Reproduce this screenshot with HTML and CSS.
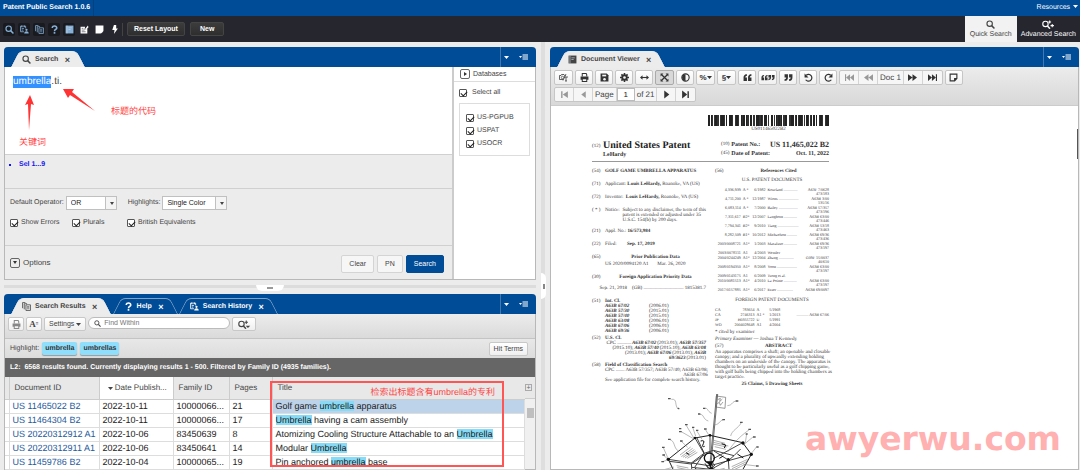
FILE: index.html
```html
<!DOCTYPE html>
<html lang="en">
<head>
    <meta charset="UTF-8">
    <meta name="viewport" content="width=device-width, initial-scale=1.0">
    <title>Patent Public Search</title>
    <link rel="stylesheet" href="styles.css">
</head>
<body>
    <svg class="sprite" aria-hidden="true">
        <symbol id="search" viewBox="0 0 16 16"><circle cx="6.5" cy="6.5" r="4.8" fill="none" stroke="currentColor" stroke-width="2"/><path d="M10 10l5 5" stroke="currentColor" stroke-width="2.6"/></symbol>
        <symbol id="search-plus" viewBox="0 0 22 16"><circle cx="6.5" cy="7" r="4.8" fill="none" stroke="currentColor" stroke-width="2"/><path d="M10 10.500l4.500 5" stroke="currentColor" stroke-width="2.600"/><path d="M15 1v6M12 4h6" stroke="currentColor" stroke-width="1.800"/><path d="M14 10h8l-4 4z" fill="currentColor"/></symbol>
        <symbol id="search-adv" viewBox="0 0 22 16"><circle cx="6.5" cy="7" r="4.8" fill="none" stroke="currentColor" stroke-width="2"/><path d="M10 10.500l4.500 5" stroke="currentColor" stroke-width="2.600"/><path d="M14 1v5M11.500 3.500h5M18.500 7v6M15.500 10h6" stroke="currentColor" stroke-width="1.800"/></symbol>
        <symbol id="history" viewBox="0 0 16 16"><path d="M1 2h9v4M1 2v10h6M3 1v3M8 1v3M3 6h4M3 9h3" fill="none" stroke="currentColor" stroke-width="1.500"/><circle cx="11.500" cy="8.500" r="2" fill="currentColor"/><path d="M7.500 15c0-5 8-5 8 0z" fill="currentColor"/></symbol>
        <symbol id="pages" viewBox="0 0 16 16"><path d="M1 11V1h5M4 13V3h5" fill="none" stroke="currentColor" stroke-width="1.400"/><path d="M7 5h8v10H7z" fill="none" stroke="currentColor" stroke-width="1.400"/><path d="M9 8h4M9 10h4M9 12h4" stroke="currentColor"/></symbol>
        <symbol id="help" viewBox="0 0 16 16"><path d="M4 5.500C4 0 12.500 1 12 5.500 11.800 8 8 8 8 11" fill="none" stroke="currentColor" stroke-width="2.800"/><path d="M6.500 12.500h3v3h-3z" fill="currentColor"/></symbol>
        <symbol id="book" viewBox="0 0 16 16"><path d="M1 1h14v14H1z" fill="currentColor"/><path d="M3.500 1v14M6 5h6M6 8h4" stroke="#c8d4de" stroke-width="1.200"/></symbol>
        <symbol id="note-edit" viewBox="0 0 16 16"><path d="M1 3h8l-1 5 5-1v8H1z" fill="currentColor"/><path d="M9 7l5-6 1 3-4 5z" fill="currentColor"/><path d="M3 6h3M3 9h5M3 12h7" stroke="#26262e"/></symbol>
        <symbol id="note-solid" viewBox="0 0 16 16"><path d="M1 1h14v9l-5 5H1z" fill="currentColor"/><path d="M11 15v-4h4z" fill="currentColor"/></symbol>
        <symbol id="bolt" viewBox="0 0 16 16"><path d="M7 0h4v6h3L7 16l1-7H4z" fill="currentColor"/></symbol>
        <symbol id="print" viewBox="0 0 16 16"><path d="M4 6V1h7l1 2v3" fill="none" stroke="currentColor" stroke-width="1.800"/><path d="M1 6h14v6h-3v-2H4v2H1z" fill="currentColor"/><path d="M4 10h8v5H4z" fill="none" stroke="currentColor" stroke-width="1.800"/></symbol>
        <symbol id="camera" viewBox="0 0 18 16"><path d="M1 4h3l1-2h5l1 2h2M1 4v8h7" fill="none" stroke="currentColor" stroke-width="1.500"/><circle cx="7" cy="8" r="2.500" fill="none" stroke="currentColor" stroke-width="1.300"/><path d="M14 1L8 14M10 7h8M14 7v8M12 15h4" stroke="currentColor" stroke-width="1.500"/></symbol>
        <symbol id="save" viewBox="0 0 16 16"><path d="M1 1h11l3 3v11H1z" fill="currentColor"/><path d="M4 3h7v3H4z" fill="#f4f4f4"/><circle cx="8" cy="11" r="2.300" fill="#f4f4f4"/></symbol>
        <symbol id="gear" viewBox="0 0 16 16"><circle cx="8" cy="8" r="4" fill="none" stroke="currentColor" stroke-width="3.200"/><path d="M8 0v4M8 12v4M0 8h4M12 8h4M2.500 2.500l3 3M10.500 10.500l3 3M2.500 13.500l3-3M10.500 5.500l3-3" stroke="currentColor" stroke-width="2.800"/></symbol>
        <symbol id="arrows-h" viewBox="0 0 16 16"><path d="M2 8h12" stroke="currentColor" stroke-width="2"/><path d="M0 8l4.500-4v8zM16 8l-4.500-4v8z" fill="currentColor"/></symbol>
        <symbol id="expand" viewBox="0 0 16 16"><path d="M3 3l10 10M13 3L3 13" stroke="currentColor" stroke-width="2.200"/><path d="M1 1h5L1 6zM15 1v5l-5-5zM1 15v-5l5 5zM15 15h-5l5-5z" fill="currentColor"/></symbol>
        <symbol id="contrast" viewBox="0 0 16 16"><circle cx="8" cy="8" r="6.500" fill="none" stroke="currentColor" stroke-width="2"/><path d="M8 2a6 6 0 0 0 0 12z" fill="currentColor"/></symbol>
        <symbol id="quote-open" viewBox="0 0 16 16"><path d="M7 2C2 2 1 5 1 9v5h6V8H4q0-3 3-3zM15 2c-5 0-6 3-6 7v5h6V8h-3q0-3 3-3z" fill="currentColor"/></symbol>
        <symbol id="quote-close" viewBox="0 0 16 16"><path d="M1 14c5 0 6-3 6-7V2H1v6h3q0 3-3 3zM9 14c5 0 6-3 6-7V2H9v6h3q0 3-3 3z" fill="currentColor"/></symbol>
        <symbol id="undo" viewBox="0 0 16 16"><path d="M4 4a6 6 0 1 1-1 8" fill="none" stroke="currentColor" stroke-width="2.200"/><path d="M1 1v7h7z" fill="currentColor"/></symbol>
        <symbol id="redo" viewBox="0 0 16 16"><path d="M12 4a6 6 0 1 0 1 8" fill="none" stroke="currentColor" stroke-width="2.200"/><path d="M15 1v7H8z" fill="currentColor"/></symbol>
        <symbol id="prev" viewBox="0 0 16 16"><path d="M12 2v12L4 8z" fill="currentColor"/></symbol>
        <symbol id="next" viewBox="0 0 16 16"><path d="M4 1v14l9-7z" fill="currentColor"/></symbol>
        <symbol id="first" viewBox="0 0 16 16"><path d="M2 2h2.500v12H2zM14 2v12L5 8z" fill="currentColor"/></symbol>
        <symbol id="last" viewBox="0 0 16 16"><path d="M11.500 2H14v12h-2.500zM2 1v14l9-7z" fill="currentColor"/></symbol>
        <symbol id="rewind" viewBox="0 0 16 16"><path d="M8 2v12L0 8zM16 2v12L8 8z" fill="currentColor"/></symbol>
        <symbol id="forward" viewBox="0 0 16 16"><path d="M0 2v12l8-6zM8 2v12l8-6z" fill="currentColor"/></symbol>
        <symbol id="fast-first" viewBox="0 0 16 16"><path d="M0 2h2v12H0zM9 2v12L2 8zM16 2v12L9 8z" fill="currentColor"/></symbol>
        <symbol id="fast-last" viewBox="0 0 16 16"><path d="M0 2v12l7-6zM7 2v12l7-6zM14 2h2v12h-2z" fill="currentColor"/></symbol>
        <symbol id="note" viewBox="0 0 16 16"><path d="M2 2h12v8l-4 4H2zM10 14v-4h4" fill="none" stroke="currentColor" stroke-width="2"/></symbol>
        <symbol id="menu" viewBox="0 0 18 12"><path d="M0 4h6L3 8z" fill="currentColor"/><path d="M7 2h11M7 6h11M7 10h11" stroke="currentColor" stroke-width="2.400"/></symbol>
        <symbol id="caret" viewBox="0 0 10 6"><path d="M0 0h10L5 6z" fill="currentColor"/></symbol>
    </svg>

    <header class="title-bar">
        <h1>Patent Public Search 1.0.6</h1>
        <a href="#">Resources <svg class="caret"><use href="#caret"/></svg></a>
    </header>

    <nav class="main-bar">
        <div class="gadgets">
            <button class="on" aria-label="Search"><svg><use href="#search"/></svg></button>
            <button class="on" aria-label="Search History"><svg><use href="#history"/></svg></button>
            <button class="on" aria-label="Search Results"><svg><use href="#pages"/></svg></button>
            <button class="on" aria-label="Help"><svg><use href="#help"/></svg></button>
            <button class="on" aria-label="Document Viewer"><svg><use href="#book"/></svg></button>
            <button aria-label="Tagged documents"><svg><use href="#note-edit"/></svg></button>
            <button aria-label="Notes"><svg><use href="#note-solid"/></svg></button>
            <button aria-label="Hit terms"><svg><use href="#bolt"/></svg></button>
        </div>
        <button class="dark-button">Reset Layout</button>
        <button class="dark-button new">New</button>
        <div class="modes">
            <a class="mode active" href="#"><svg><use href="#search"/></svg>Quick Search</a>
            <a class="mode" href="#"><svg class="wide-icon"><use href="#search-adv"/></svg>Advanced Search</a>
        </div>
    </nav>

    <main>
        <div class="left-side">
            <section class="panel">
                <div class="panel-head">
                    <div class="tab active"><svg><use href="#search"/></svg><span>Search</span><button aria-label="Close">×</button></div>
                    <div class="head-tools">
                        <button aria-label="Collapse"><svg class="caret"><use href="#caret"/></svg></button>
                        <button aria-label="Menu"><svg class="menu"><use href="#menu"/></svg></button>
                    </div>
                </div>
                <div class="search-body">
                    <form class="query">
                        <div class="editor" contenteditable="true" role="textbox" aria-label="Query" spellcheck="false"><mark>umbrella</mark>.ti.</div>
                        <ul class="sel"><li>Sel 1...9</li></ul>
                        <div class="settings">
                            <div class="line">
                                <label for="operator">Default Operator:</label>
                                <span class="select"><select id="operator"><option>OR</option><option>AND</option></select></span>
                                <label for="colors" class="second">Highlights:</label>
                                <span class="select long"><select id="colors"><option>Single Color</option><option>Multi Color</option></select></span>
                            </div>
                            <div class="checks">
                                <label><input type="checkbox" checked>Show Errors</label>
                                <label><input type="checkbox" checked>Plurals</label>
                                <label><input type="checkbox" checked>British Equivalents</label>
                            </div>
                        </div>
                        <div class="query-foot">
                            <button type="button" class="options"><span class="square down"></span>Options</button>
                            <button type="button" class="button">Clear</button>
                            <button type="button" class="button pn">PN</button>
                            <button type="button" class="button primary">Search</button>
                        </div>
                    </form>
                    <aside class="databases">
                        <button class="db-head"><span class="square right"></span>Databases</button>
                        <label class="all"><input type="checkbox" checked>Select all</label>
                        <div class="db-list">
                            <label><input type="checkbox" checked>US-PGPUB</label>
                            <label><input type="checkbox" checked>USPAT</label>
                            <label><input type="checkbox" checked>USOCR</label>
                        </div>
                    </aside>
                    <svg class="arrows" viewBox="0 0 110 80" aria-hidden="true">
                        <path d="M25 28L20 38l3-1 1 26 2-26 3 1z" fill="#f33"/>
                        <path d="M58 22l5 9 2-3 25 16-23-19 2-3z" fill="#f33"/>
                    </svg>
                    <span class="remark keyword" lang="zh">关键词</span>
                    <span class="remark code" lang="zh">标题的代码</span>
                </div>
            </section>

            <div class="split-row"><span></span></div>

            <section class="panel results">
                <div class="panel-head">
                    <div class="tab active"><svg><use href="#pages"/></svg><span>Search Results</span><button aria-label="Close">×</button></div>
                    <div class="tab"><svg><use href="#help"/></svg><span>Help</span><button aria-label="Close">×</button></div>
                    <div class="tab"><svg><use href="#history"/></svg><span>Search History</span><button aria-label="Close">×</button></div>
                    <div class="head-tools">
                        <button aria-label="Collapse"><svg class="caret"><use href="#caret"/></svg></button>
                        <button aria-label="Menu"><svg class="menu"><use href="#menu"/></svg></button>
                    </div>
                </div>
                <div class="result-tools">
                    <button class="button icon dim" aria-label="Print"><svg><use href="#print"/></svg></button>
                    <button class="button icon font-size">A<small>≡</small></button>
                    <button class="button settings-button">Settings <svg class="caret"><use href="#caret"/></svg></button>
                    <label class="find"><svg><use href="#search"/></svg><input type="text" placeholder="Find Within" aria-label="Find Within"></label>
                    <button class="button find-more" aria-label="Search options"><svg class="wide-icon"><use href="#search-plus"/></svg></button>
                </div>
                <div class="highlight">
                    <span>Highlight:</span>
                    <b>umbrella</b>
                    <b>umbrellas</b>
                    <button class="button hit-terms">Hit Terms</button>
                </div>
                <p class="status">L2: &nbsp;6568 results found. Currently displaying results 1 - 500. Filtered by Family ID (4935 families).</p>
                <div class="grid">
                    <table>
                        <colgroup><col class="c-stub"><col class="c-id"><col class="c-date"><col class="c-family"><col class="c-pages"><col></colgroup>
                        <thead>
                            <tr><th></th><th>Document ID</th><th class="sorted"><svg class="caret"><use href="#caret"/></svg> Date Publish...</th><th>Family ID</th><th>Pages</th><th>Title</th></tr>
                        </thead>
                        <tbody>
                            <tr class="current"><td></td><td><a href="#">US 11465022 B2</a></td><td>2022-10-11</td><td>10000066...</td><td>21</td><td>Golf game <mark>umbrella</mark> apparatus</td></tr>
                            <tr><td></td><td><a href="#">US 11464304 B2</a></td><td>2022-10-11</td><td>10000066...</td><td>17</td><td><mark>Umbrella</mark> having a cam assembly</td></tr>
                            <tr><td></td><td><a href="#">US 20220312912 A1</a></td><td>2022-10-06</td><td>83450639</td><td>8</td><td>Atomizing Cooling Structure Attachable to an <mark>Umbrella</mark></td></tr>
                            <tr><td></td><td><a href="#">US 20220312911 A1</a></td><td>2022-10-06</td><td>83450641</td><td>14</td><td>Modular <mark>Umbrella</mark></td></tr>
                            <tr><td></td><td><a href="#">US 11459786 B2</a></td><td>2022-10-04</td><td>10000065...</td><td>19</td><td>Pin anchored <mark>umbrella</mark> base</td></tr>
                        </tbody>
                    </table>
                    <div class="scroll"><button aria-label="Add column"><span>+</span></button><i></i></div>
                    <div class="red-box" lang="zh">检索出标题含有umbrella的专利</div>
                </div>
            </section>
        </div>

        <div class="split-column"><span></span></div>

        <section class="panel viewer">
            <div class="panel-head">
                <div class="tab active"><svg><use href="#book"/></svg><span>Document Viewer</span><button aria-label="Close">×</button></div>
                <div class="head-tools">
                    <button aria-label="Collapse"><svg class="caret"><use href="#caret"/></svg></button>
                    <button aria-label="Menu"><svg class="menu"><use href="#menu"/></svg></button>
                </div>
            </div>
            <div class="viewer-tools">
                <div class="tool-row">
                    <button class="wide" aria-label="Snapshot text"><svg><use href="#camera"/></svg></button>
                    <button aria-label="Print"><svg><use href="#print"/></svg></button>
                    <button aria-label="Save"><svg><use href="#save"/></svg></button>
                    <button aria-label="Settings"><svg><use href="#gear"/></svg></button>
                    <button aria-label="Fit width"><svg><use href="#arrows-h"/></svg></button>
                    <button class="wide pressed" aria-label="Fit page"><svg><use href="#expand"/></svg></button>
                    <button aria-label="Invert"><svg><use href="#contrast"/></svg></button>
                    <button class="wide">%<svg class="caret"><use href="#caret"/></svg></button>
                    <button class="wide">§<svg class="caret"><use href="#caret"/></svg></button>
                    <button aria-label="Previous hit"><svg><use href="#quote-open"/></svg></button>
                    <button class="wide pair" aria-label="All hits"><svg><use href="#quote-open"/></svg><svg><use href="#quote-close"/></svg></button>
                    <button aria-label="Next hit"><svg><use href="#quote-close"/></svg></button>
                    <button aria-label="Rotate left"><svg><use href="#undo"/></svg></button>
                    <button aria-label="Rotate right"><svg><use href="#redo"/></svg></button>
                    <div class="group">
                        <button disabled aria-label="First document"><svg><use href="#fast-first"/></svg></button>
                        <button disabled aria-label="Previous document"><svg><use href="#rewind"/></svg></button>
                        <span>Doc 1</span>
                        <button aria-label="Next document"><svg><use href="#forward"/></svg></button>
                        <button aria-label="Last document"><svg><use href="#fast-last"/></svg></button>
                    </div>
                    <button aria-label="Note"><svg><use href="#note"/></svg></button>
                </div>
                <div class="tool-row">
                    <div class="group pager">
                        <button disabled aria-label="First page"><svg><use href="#first"/></svg></button>
                        <button disabled aria-label="Previous page"><svg><use href="#prev"/></svg></button>
                        <label for="page">Page</label>
                        <input type="text" id="page" value="1">
                        <span>of 21</span>
                        <button aria-label="Next page"><svg><use href="#next"/></svg></button>
                        <button aria-label="Last page"><svg><use href="#last"/></svg></button>
                    </div>
                </div>
            </div>
            <div class="document">
                <article class="sheet">
                    <div class="barcode"><div></div>US011465022B2</div>
                    <div class="masthead">
                        <div class="entry"><span>(12)</span><div><h2>United States Patent</h2><b>LeHardy</b></div></div>
                        <div class="numbers">
                            <p>(10) <b>Patent No.:</b><strong>US 11,465,022 B2</strong></p>
                            <p>(45) <b>Date of Patent:</b><b>Oct. 11, 2022</b></p>
                        </div>
                    </div>
                    <div class="columns">
                        <div class="column">
                            <div class="entry"><span>(54)</span><b>GOLF GAME UMBRELLA APPARATUS</b></div>
                            <div class="entry"><span>(71)</span><div>Applicant: <b>Louis LeHardy,</b> Roanoke, VA (US)</div></div>
                            <div class="entry"><span>(72)</span><div>Inventor: &nbsp;<b>Louis LeHardy,</b> Roanoke, VA (US)</div></div>
                            <div class="entry notice"><span>( * )</span><em>Notice:</em><div>Subject to any disclaimer, the term of this<br>patent is extended or adjusted under 35<br>U.S.C. 154(b) by 200 days.</div></div>
                            <div class="entry"><span>(21)</span><div>Appl. No.: <b>16/573,984</b></div></div>
                            <div class="entry"><span>(22)</span><em>Filed:</em><b>Sep. 17, 2019</b></div>
                            <div class="entry short"><span>(65)</span><b class="middle">Prior Publication Data</b></div>
                            <div class="entry"><span></span><div>US 2020/0094120 A1 &nbsp; &nbsp; &nbsp; Mar. 26, 2020</div></div>
                            <div class="entry"><span>(30)</span><b class="middle">Foreign Application Priority Data</b></div>
                            <p class="priority">Sep. 21, 2018 &nbsp; &nbsp;(GB) ................................ 1815381.7</p>
                            <div class="entry short"><span>(51)</span><div class="classes"><b>Int. Cl.</b><i></i>
                                <b><cite>A63B 67/02</cite></b><i>(2006.01)</i>
                                <b><cite>A63B 57/30</cite></b><i>(2015.01)</i>
                                <b><cite>A63B 57/40</cite></b><i>(2015.01)</i>
                                <b><cite>A63B 63/08</cite></b><i>(2006.01)</i>
                                <b><cite>A63B 67/06</cite></b><i>(2006.01)</i>
                                <b><cite>A63B 69/36</cite></b><i>(2006.01)</i></div></div>
                            <div class="entry short"><span>(52)</span><div class="cpc"><b>U.S. Cl.</b>
                                <p>CPC ........... <cite>A63B 67/02</cite> (2013.01); <cite>A63B 57/357</cite></p>
                                <p>(2015.10); <cite>A63B 57/40</cite> (2015.10); <cite>A63B 63/08</cite></p>
                                <p>(2013.01); <cite>A63B 67/06</cite> (2013.01); <cite>A63B</cite></p>
                                <p><cite>69/3623</cite> (2013.01)</p></div></div>
                            <div class="entry"><span>(58)</span><div class="cpc"><b>Field of Classification Search</b>
                                <p>CPC ....... A63B 57/357; A63B 57/40; A63B 63/08;</p>
                                <p>A63B 67/06</p>
                                See application file for complete search history.</div></div>
                        </div>
                        <div class="column">
                            <div class="entry cited"><span>(56)</span><b class="middle">References Cited</b></div>
                            <h3>U.S. PATENT DOCUMENTS</h3>
                            <table class="refs">
                                <tr><td>4,336,939</td><td>A *</td><td>6/1982</td><td>Kourland ..............</td><td>A63F 7/0628<br>473/183</td></tr>
                                <tr><td>4,711,200</td><td>A *</td><td>12/1987</td><td>Wiens ....................</td><td>A63B 3/00<br>135/16</td></tr>
                                <tr><td>6,083,114</td><td>A *</td><td>7/2000</td><td>Bailey ...................</td><td>A63B 57/357<br>473/196</td></tr>
                                <tr><td>7,311,617</td><td>B2*</td><td>12/2007</td><td>Langhorn .............</td><td>A63B 63/00<br>473/446</td></tr>
                                <tr><td>7,794,341</td><td>B2*</td><td>9/2010</td><td>Tiang .....................</td><td>A63B 53/18<br>473/463</td></tr>
                                <tr><td>8,282,509</td><td>B1*</td><td>10/2012</td><td>Michaelson ..........</td><td>A63B 69/36<br>473/436</td></tr>
                                <tr><td>2003/0008721</td><td>A1*</td><td>1/2003</td><td>Macaluso .............</td><td>A63B 69/36<br>473/197</td></tr>
                                <tr><td>2003/0078111</td><td>A1</td><td>4/2003</td><td>Wentler</td><td></td></tr>
                                <tr><td>2004/0244249</td><td>A1*</td><td>12/2004</td><td>Zhang ...............</td><td>G09F 15/0037<br>40/610</td></tr>
                                <tr><td>2008/0194350</td><td>A1*</td><td>8/2008</td><td>Yoon ....................</td><td>A63B 63/00<br>473/197</td></tr>
                                <tr><td>2009/0143175</td><td>A1</td><td>6/2009</td><td>Tseng et al.</td><td></td></tr>
                                <tr><td>2010/0081513</td><td>A1*</td><td>4/2010</td><td>La Pointe .............</td><td>A63B 63/00<br>473/197</td></tr>
                                <tr><td>2017/0157885</td><td>A1*</td><td>6/2017</td><td>Esser ................</td><td>A63B 69/0097</td></tr>
                            </table>
                            <h3>FOREIGN PATENT DOCUMENTS</h3>
                            <table class="refs foreign">
                                <tr><td>CA</td><td>783654</td><td>A</td><td>5/1968</td><td></td></tr>
                                <tr><td>CA</td><td>2746313</td><td>A1 *</td><td>1/2013</td><td>............ A63B 67/06</td></tr>
                                <tr><td>JP</td><td>H0355722</td><td>U</td><td>5/1991</td><td></td></tr>
                                <tr><td>WO</td><td>2004028648</td><td>A1</td><td>4/2004</td><td></td></tr>
                            </table>
                            <p class="examiner">* cited by examiner</p>
                            <p class="examiner"><i>Primary Examiner</i> — Joshua T Kennedy</p>
                            <div class="entry abstract"><span>(57)</span><b class="middle">ABSTRACT</b></div>
                            <p class="summary">An apparatus comprises a shaft; an openable and closable<br>canopy; and a plurality of upwardly extending holding<br>chambers on an underside of the canopy. The apparatus is<br>thought to be particularly useful as a golf chipping game,<br>with golf balls being chipped into the holding chambers as<br>target practice.</p>
                            <b class="claims">25 Claims, 5 Drawing Sheets</b>
                        </div>
                    </div>
                    <svg class="drawing" viewBox="240 170 300 252" fill="none" stroke="#444" stroke-width="2">
                        <path d="M410 182L390 390M413 182l-20 210" stroke="#222"/>
                        <path d="M409 188l28 4-2 33-28-4z" stroke="#666"/>
                        <path d="M413 199l8-4-2 10 8-8M412 211l6-4 3 9 8-10" stroke-width="1.500"/>
                        <path d="M265 378l80-64 45-8 98 22 26 35-32 57M265 378l20 42" stroke="#222" stroke-width="3"/>
                        <path d="M345 314l28 48M350 312l22 46M390 306v54M488 328l-88 48M514 363l-116 32M265 378l128 20M335 402l58 6-12 14M335 402v20M445 380l3 42M445 380l-52 28" stroke="#222" stroke-width="2.500"/>
                        <path d="M334 389l38-29 28-9 62 16 20-20M334 389l1 14M372 360l-28 42M462 367l-16 14M268 384l66 8 40-28M400 352l45 28" stroke-width="3"/>
                        <circle cx="388" cy="374" r="15" stroke="#111" stroke-width="4"/>
                        <path d="M375 390l10 16M400 388l-5 18M378 396l30 25M405 395l-28 26M350 420l45-16 42 18" stroke="#222" stroke-width="2.500"/>
                        <path d="M300 365l32-24M304 370l34-25M309 372l34-23M315 374l32-21M322 375l30-18M397 320l38 10M397 326l48 12M398 332l42 9M404 340l34 8M455 400l48-22M456 406l46-22M456 412l42-20M290 397l35 7M292 403l35 7M295 410l32 5M412 410l22-5" stroke="#888"/>
                        <path d="M362 323q14-4 8 8t4 8M425 331l12 4-4 9M318 358l10 6M345 405l12 8M472 362l18 12M418 375l12-7" stroke="#111" stroke-width="3"/>
                        <path d="M274 198c20-3 8 19 21 29M471 203c-18 1-10 12-29 14M373 226c12-5 7 8 22 14M360 243c13 0 8 15 25 20M430 260c-12 0-8 12-27 15M484 268c-10 18-28 22-32 40M508 289c-18 13-42 31-65 67M267 318c20 4 12 25 28 35M318 275l24 40M338 282l9 26M350 292l16 26M376 288l12 20M302 294l40 23M303 323l20 19M500 302l-4 26M520 310l-30 25M530 340l-18 23M250 343l15 34M250 365l15 14M248 385l20-7M252 409l30-8M530 398l-40-5" stroke="#777" stroke-width="1.500"/>
                        <path d="M264 196h8M298 227l-5-3M467 203h8M369 225h7M354 242h7M427 259h8M480 267h8M505 288h8M264 318h8M315 274h8M297 286h7M297 295h8M336 282h7M348 291h7M372 287h8M300 323h8M497 302h6M519 311h8M529 341h7M246 342h8M247 365h8M244 385h8M248 409h8M528 398h8" stroke="#555" stroke-width="4"/>
                        <g fill="#111" stroke="none"><circle cx="265" cy="378" r="5"/><circle cx="345" cy="314" r="4"/><circle cx="390" cy="306" r="4"/><circle cx="489" cy="329" r="5"/><circle cx="514" cy="363" r="5"/><circle cx="445" cy="379" r="5"/><circle cx="393" cy="407" r="6"/><path d="M380 384h20l-8 20z"/></g>
                    </svg>
                </article>
                <span class="watermark">awyerwu.com</span>
            </div>
        </section>
    </main>
</body>
</html>
```

FILE: styles.css
```css
* {
    margin: 0;
    padding: 0;
    box-sizing: border-box;
}

body {
    height: 100vh;
    display: flex;
    flex-direction: column;
    overflow: hidden;
    background-color: #ececec;
    color: #444;
    font: 7px/10px "Liberation Sans", Arial, "Noto Sans CJK SC", sans-serif;
    text-rendering: geometricPrecision;
}

button, input, select {
    font: inherit;
    color: inherit;
    border: none;
    background: none;
    outline: none;
}

a {
    color: inherit;
    text-decoration: none;
}

svg {
    width: 9px;
    height: 9px;
    flex: none;
}

.sprite {
    position: absolute;
    width: 0;
    height: 0;
}

svg.caret {
    width: 5px;
    height: 3px;
}

svg.menu {
    width: 9px;
    height: 6px;
}

svg.wide-icon {
    width: 14px;
    height: 9px;
}

/* top bars */
.title-bar {
    flex: none;
    height: 16px;
    display: flex;
    justify-content: space-between;
    align-items: center;
    background-color: #004c97;
    color: white;
    padding-right: 2px;
}

.title-bar h1 {
    font-size: 7px;
    line-height: 16px;
    padding: 0 3px;
    border-right: 1px solid #003f80;
}

.title-bar .caret {
    margin: 0 0 1px 1px;
}

.main-bar {
    flex: none;
    height: 26px;
    display: flex;
    align-items: center;
    background-color: #26262e;
    color: white;
}

.gadgets {
    display: flex;
    align-items: center;
    gap: 3px;
    padding: 0 2px 0 3px;
    margin-right: 4px;
    border-right: 1px solid #44443f;
}

.gadgets button {
    width: 12px;
    height: 13px;
    display: grid;
    place-items: center;
}

.gadgets .on {
    background-color: #181a20;
    border-radius: 2px;
    color: #86b0d8;
}

.dark-button {
    height: 14px;
    padding: 0 6px;
    margin-right: 5px;
    background: linear-gradient(#3c3c3c, #2e2e2e);
    border: 1px solid #444;
    border-radius: 2px;
    font-weight: bold;
}

.dark-button.new {
    padding: 0 9px;
}

.modes {
    margin-left: auto;
    align-self: stretch;
    display: flex;
}

.mode {
    display: flex;
    flex-direction: column;
    align-items: center;
    justify-content: center;
    gap: 1px;
    padding: 1px 4px 0;
    white-space: nowrap;
}

.mode.active {
    background-color: #f2f2f2;
    color: #444;
    padding: 1px 5px 0;
}

/* layout */
main {
    flex: 1;
    min-height: 0;
    display: flex;
    padding-top: 5px;
}

.left-side {
    flex: none;
    width: calc(50% - 4px);
    padding-left: 4px;
    display: flex;
    flex-direction: column;
}

.split-row {
    flex: none;
    height: 14px;
    padding-top: 5px;
    text-align: center;
}

.split-row::before {
    content: "";
    display: block;
    height: 3px;
    background-color: #dcdcdc;
}

.split-row span {
    display: block;
    width: 28px;
    height: 6px;
    margin: -3px auto 0;
    background: linear-gradient(#999, #999) center / 6px 2px no-repeat #fff;
    border-radius: 0 0 6px 6px;
}

.split-column {
    flex: none;
    width: 14px;
    margin-top: -5px;
    display: flex;
    align-items: center;
    background: linear-gradient(#dedede, #dedede) 5px 0 / 4px 100% no-repeat;
}

.split-column span {
    width: 5px;
    height: 26px;
    margin: 60px 0 0 5px;
    background: linear-gradient(#888, #888) center / 2px 5px no-repeat #fff;
    border-radius: 0 5px 5px 0;
}

.panel {
    border: 1px solid #b8b8b8;
    border-top: none;
    border-radius: 4px 4px 0 0;
}

.panel-head {
    height: 20px;
    margin: 0 -1px;
    padding: 4px 0 0 11px;
    display: flex;
    background-color: #004c97;
    border-radius: 4px 4px 0 0;
}

.tab {
    position: relative;
    z-index: 0;
    display: flex;
    align-items: center;
    padding: 1px 14px 0 7px;
    margin-right: 5px;
    color: white;
    font-weight: bold;
}

/* the two slanted halves overlap so the middle is fully covered */
.tab::before,
.tab::after {
    content: "";
    position: absolute;
    z-index: -1;
    top: 0;
    bottom: 0;
    border: 1px solid #7fa3c5;
    border-bottom: none;
}

.tab::before {
    left: 0;
    right: calc(50% - 8px);
    border-right: none;
    border-radius: 5px 0 0 0;
    transform: skewX(-27deg);
}

.tab::after {
    left: calc(50% - 8px);
    right: 4px;
    border-left: none;
    border-radius: 0 5px 0 0;
    transform: skewX(27deg);
}

.tab.active {
    color: #444;
}

.tab.active::before,
.tab.active::after {
    background-color: #ececec;
    border-color: #ececec;
}

.tab svg {
    margin-right: 4px;
}

.tab button {
    margin-left: 6px;
    width: 6px;
    font: bold 9px/10px "Liberation Sans", Arial, sans-serif;
}

.head-tools {
    margin: -4px 0 0 auto;
    display: flex;
    border-left: 1px solid #4078af;
    color: white;
}

.head-tools button {
    width: 10px;
    display: grid;
    place-items: center;
}

.head-tools button + button {
    width: 25px;
}

.button {
    height: 14px;
    padding: 0 4px;
    background: linear-gradient(#fff, #efefef);
    border: 1px solid #c8c8c8;
    border-radius: 2px;
    white-space: nowrap;
}

/* search panel */
.search-body {
    position: relative;
    display: flex;
}

.query {
    flex: 1;
    border-right: 2px solid #ccc;
}

.editor {
    height: 87px;
    padding: 8px;
    background-color: white;
    font-size: 10px;
    line-height: 14px;
}

.editor mark {
    display: inline-block;
    line-height: 12px;
    background-color: #3390ff;
    color: white;
}

.sel {
    height: 34px;
    padding: 5px 14px;
    border-top: 1px solid #d0d0d0;
    color: #1414f0;
    font-weight: bold;
    list-style: square outside;
}

.settings {
    height: 57px;
    padding: 6px 5px;
    border-top: 1px solid #d0d0d0;
}

.line {
    display: flex;
    align-items: center;
    gap: 2px;
    height: 15px;
}

.second {
    margin-left: 9px;
}

.select {
    position: relative;
    width: 51px;
    height: 14px;
    background-color: white;
    border: 1px solid #c0c0c0;
}

.select.long {
    width: 65px;
}

.select select {
    width: 100%;
    height: 12px;
    padding-left: 4px;
    appearance: none;
    color: #222;
}

.select::before,
.select::after {
    content: "";
    position: absolute;
    pointer-events: none;
}

.select::before {
    top: 0;
    right: 0;
    bottom: 0;
    width: 10px;
    background-color: #f4f4f4;
    border-left: 1px solid #c0c0c0;
}

.select::after {
    top: 5px;
    right: 2px;
    border: 2px solid transparent;
    border-top: 3px solid #444;
}

.checks {
    display: grid;
    grid-template-columns: 62px 55px auto;
    padding-top: 8px;
}

label {
    display: flex;
    align-items: center;
}

input[type="checkbox"] {
    appearance: none;
    flex: none;
    width: 8px;
    height: 8px;
    margin-right: 3px;
    background-color: white;
    border: 1px solid #555;
    border-radius: 1px;
}

input[type="checkbox"]:checked::before {
    content: "";
    display: block;
    width: 5px;
    height: 3px;
    margin: 1px;
    border: solid #222;
    border-width: 0 0 1px 1px;
    transform: rotate(-45deg);
}

.query-foot {
    height: 34px;
    display: flex;
    align-items: center;
    gap: 3px;
    padding: 3px 8px 0 5px;
    border-top: 1px solid #d0d0d0;
}

.query-foot .button {
    height: 18px;
    padding: 0 7px;
    background: #f6f6f6;
    border-color: #d4d4d4;
}

.query-foot .primary {
    background: #004c97;
    border-color: #004c97;
    color: white;
}

.options {
    display: flex;
    align-items: center;
    gap: 3px;
    margin: 0 auto 3px 0;
    font-size: 8px;
}

.square {
    width: 10px;
    height: 10px;
    display: grid;
    place-items: center;
    border: 1px solid #666;
    border-radius: 2px;
}

.square::before {
    content: "";
    border: 2px solid transparent;
}

.square.down::before {
    border-top: 3px solid #333;
    border-bottom: none;
}

.square.right::before {
    border-left: 3px solid #333;
    border-right: none;
}

.databases {
    width: 81px;
    background-color: white;
}

.db-head {
    width: 100%;
    height: 15px;
    display: flex;
    align-items: center;
    gap: 3px;
    padding-left: 6px;
    border-bottom: 1px solid #ddd;
}

.all {
    padding: 6px 5px 5px;
}

.all input[type="checkbox"] {
    margin-right: 5px;
}

.db-list {
    height: 53px;
    margin: 0 5px;
    padding: 7px 6px;
    border: 1px solid #ddd;
}

.db-list label {
    height: 13px;
}

.arrows {
    position: absolute;
    left: 0;
    top: 0;
    width: 110px;
    height: 80px;
}

.remark {
    position: absolute;
    color: #f44;
    font-size: 9px;
}

.keyword {
    left: 14px;
    top: 70px;
}

.code {
    left: 106px;
    top: 39px;
}

/* results panel */
.results {
    flex: 1;
    min-height: 0;
    display: flex;
    flex-direction: column;
}

.results .panel-head,
.result-tools,
.highlight,
.status {
    flex: none;
}

.result-tools {
    height: 24px;
    display: flex;
    align-items: flex-start;
    gap: 2px;
    padding: 3px 3px 0;
    background: linear-gradient(#ececec, #dadada);
}

.result-tools .button {
    display: flex;
    align-items: center;
    justify-content: center;
}

.result-tools .icon {
    width: 16px;
    padding: 0;
}

.result-tools .dim {
    color: #888;
}

.font-size {
    font: bold 9px/10px "Liberation Serif", serif;
}

.font-size small {
    font-size: 5px;
}

.settings-button {
    gap: 2px;
}

.find {
    flex: none;
    width: 27%;
    height: 12px;
    gap: 3px;
    padding: 0 5px;
    background-color: white;
    border: 1px solid #bbb;
    border-radius: 6px;
}

.find svg {
    width: 7px;
    height: 7px;
}

.find input {
    min-width: 0;
    flex: 1;
}

.highlight {
    height: 20px;
    display: flex;
    align-items: center;
    gap: 3px;
    padding: 0 7px 0 5px;
    background: linear-gradient(#e8e8e8, #dcdcdc);
    border-top: 1px solid #c4c4c4;
}

.highlight b {
    padding: 1px 3px;
    line-height: 11px;
    background-color: #8fdffc;
    border-radius: 2px;
    box-shadow: 0 1px 1px #999;
    color: #333;
}

.hit-terms {
    margin-left: auto;
}

.status {
    height: 19px;
    padding-left: 5px;
    background-color: #666;
    color: white;
    font-weight: bold;
    line-height: 19px;
    white-space: nowrap;
}

.grid {
    position: relative;
    flex: 1;
    min-height: 0;
    display: flex;
    align-items: stretch;
    background-color: white;
}

.grid table {
    flex: 1;
    width: 0;
    align-self: flex-start;
    table-layout: fixed;
    border-collapse: collapse;
}

.c-stub {
    width: 4px;
}

.c-id {
    width: 90px;
}

.c-date {
    width: 74px;
}

.c-family {
    width: 56px;
}

.c-pages {
    width: 43px;
}

.grid th {
    height: 22px;
    padding-left: 5px;
    background-color: #e8e8e8;
    border-right: 1px solid #ccc;
    border-bottom: 1px solid #ccc;
    font-size: 8px;
    font-weight: normal;
    text-align: left;
    white-space: nowrap;
}

.grid th:last-child {
    border-right: none;
}

.grid .sorted {
    background-color: white;
    padding-left: 8px;
}

.grid td {
    height: 14px;
    padding-left: 3px;
    border-right: 1px solid #ddd;
    border-bottom: 1px solid #ddd;
    color: #222;
    font-size: 9px;
    line-height: 13px;
    white-space: nowrap;
}

.grid td:first-child,
.grid th:first-child {
    padding: 0;
}

.grid td a {
    color: #1c5a9c;
}

.grid .current td:last-child {
    background-color: #bdd3ea;
}

.grid mark {
    background-color: #86dcf6;
    color: inherit;
}

.scroll {
    width: 10px;
    background-color: #f0f0f0;
}

.scroll button {
    width: 10px;
    height: 22px;
    display: flex;
    align-items: center;
    background-color: #e8e8e8;
    border-bottom: 1px solid #ccc;
}

.scroll span {
    width: 7px;
    height: 7px;
    border: 1px solid #aaa;
    color: #666;
    line-height: 5px;
    text-align: center;
}

.scroll i {
    display: block;
    width: 7px;
    height: 10px;
    margin: 9px auto;
    background-color: #bfbfbf;
}

.red-box {
    position: absolute;
    top: 4px;
    bottom: 2px;
    left: 265px;
    right: 31px;
    padding: 3px 7px;
    border: 2px solid #f55;
    color: #f44;
    font-size: 9px;
    line-height: 12px;
    text-align: right;
}

/* document viewer */
.viewer {
    flex: 1;
    min-width: 0;
    margin-right: 1px;
    display: flex;
    flex-direction: column;
}

.viewer .panel-head {
    flex: none;
}

.viewer-tools {
    flex: none;
    height: 39px;
    padding: 3px;
    background: linear-gradient(#ececec, #d8d8d8);
    border-bottom: 1px solid #ccc;
}

.tool-row {
    display: flex;
    gap: 2px;
    height: 15px;
    margin-bottom: 2px;
}

.tool-row button {
    width: 18px;
    display: flex;
    align-items: center;
    justify-content: center;
    background: linear-gradient(#fff, #f0f0f0);
    border: 1px solid #c6c6c6;
    border-radius: 2px;
    color: #333;
    font-size: 8px;
    font-weight: bold;
}

.tool-row .wide {
    width: 19px;
}

.tool-row .pressed {
    background: #d8d8d8;
    border-color: #aaa;
}

.tool-row .pair svg {
    width: 7px;
    height: 7px;
}

.group {
    display: flex;
    background-color: #f6f6f6;
    border: 1px solid #c6c6c6;
    border-radius: 2px;
}

.tool-row .group button {
    width: 19px;
    background: none;
    border: none;
    border-right: 1px solid #d4d4d4;
    border-radius: 0;
}

.tool-row .group button:last-child {
    border-right: none;
}

.tool-row button:disabled {
    color: #999;
}

.group span,
.group label {
    padding: 0 2px;
    font-size: 8px;
    line-height: 13px;
    border-right: 1px solid #d4d4d4;
}

.group input {
    width: 18px;
    background-color: white;
    border: 1px solid #bbb;
    color: #222;
    font-size: 8px;
    text-align: center;
}

.document {
    position: relative;
    flex: 1;
    min-height: 0;
    overflow: hidden;
    padding: 9px 41px 0;
    background-color: white;
}

/* scroll thumb at the right edge */
.document::after {
    content: "";
    position: absolute;
    top: 23px;
    right: 0;
    width: 1px;
    height: 30px;
    background-color: #555;
}

.watermark {
    position: absolute;
    right: 17px;
    bottom: 10px;
    color: #ffb0b0;
    font: bold 33px/40px "DejaVu Sans", sans-serif;
}

/* patent page */
.sheet {
    width: 237px;
    color: #333;
    font: 5px/5px "Liberation Serif", "Times New Roman", serif;
    white-space: nowrap;
}

.barcode {
    width: 121px;
    margin-left: auto;
    text-align: center;
}

.barcode div {
    height: 11px;
    margin-bottom: 1px;
    background:
        repeating-linear-gradient(90deg, #222 0 2px, transparent 2px 7px),
        repeating-linear-gradient(90deg, transparent 0 3px, #222 3px 4px, transparent 4px 5px),
        repeating-linear-gradient(90deg, #333 0 1px, #fff 1px 3px, #333 3px 5px, #fff 5px 6px);
}

.masthead {
    display: flex;
    justify-content: space-between;
    height: 30px;
    padding-top: 9px;
    margin-bottom: 7px;
    border-bottom: 1px solid #999;
}

.masthead h2 {
    font-size: 10px;
    line-height: 10px;
    color: #222;
}

.masthead b {
    font-size: 6px;
    line-height: 8px;
}

.numbers {
    width: 108px;
}

.numbers p {
    display: flex;
    gap: 2px;
    margin-bottom: 1px;
    line-height: 8px;
}

.numbers b,
.numbers strong {
    line-height: 8px;
}

.numbers strong {
    font-size: 8px;
    margin-left: auto;
}

.numbers b + b {
    margin-left: auto;
}

.columns {
    display: grid;
    grid-template-columns: 114px 114px;
    gap: 9px;
}

.entry {
    display: flex;
    margin-bottom: 8px;
}

.entry span {
    flex: none;
    width: 13px;
}

.masthead .entry span {
    width: 11px;
    line-height: 12px;
}

.entry em {
    width: 22px;
    font-style: normal;
}

.entry .middle {
    flex: 1;
    text-align: center;
}

.entry.notice {
    margin-bottom: 6px;
}

.entry.short {
    margin-bottom: 2px;
}

.column .entry:last-child {
    margin-bottom: 0;
}

.priority {
    margin: -2px 0 8px;
    text-align: right;
}

.classes {
    display: grid;
    grid-template-columns: 44px auto;
}

.classes i {
    font-style: normal;
}

.cpc {
    flex: 1;
}

.cpc cite {
    font-weight: bold;
}

.cpc p {
    display: flex;
    justify-content: flex-end;
    gap: 1px;
}

.entry.cited {
    margin-bottom: 4px;
}

.column h3 {
    margin-bottom: 5px;
    font-size: 5px;
    font-weight: normal;
    text-align: center;
}

.refs {
    width: 100%;
    margin-bottom: 5px;
    border-collapse: collapse;
    font-size: 4px;
    line-height: 4px;
}

.refs td {
    padding: 0 0 1px;
    vertical-align: top;
}

.refs td:nth-child(1),
.refs td:nth-child(3),
.refs td:nth-child(5) {
    text-align: right;
}

.refs td:nth-child(2),
.refs td:nth-child(4) {
    padding-left: 2px;
}

.foreign {
    margin-bottom: 2px;
}

.foreign td:nth-child(1) {
    text-align: left;
}

.foreign td:nth-child(2) {
    text-align: right;
    padding-right: 2px;
}

.foreign td:nth-child(3) {
    text-align: left;
}

.examiner {
    margin-bottom: 2px;
}

.entry.abstract {
    margin: 2px 0 1px;
}

.claims {
    display: block;
    margin-top: 2px;
    text-align: center;
}

.drawing {
    display: block;
    width: 100px;
    height: 84px;
    margin: 3px 0 0 68px;
}
```
